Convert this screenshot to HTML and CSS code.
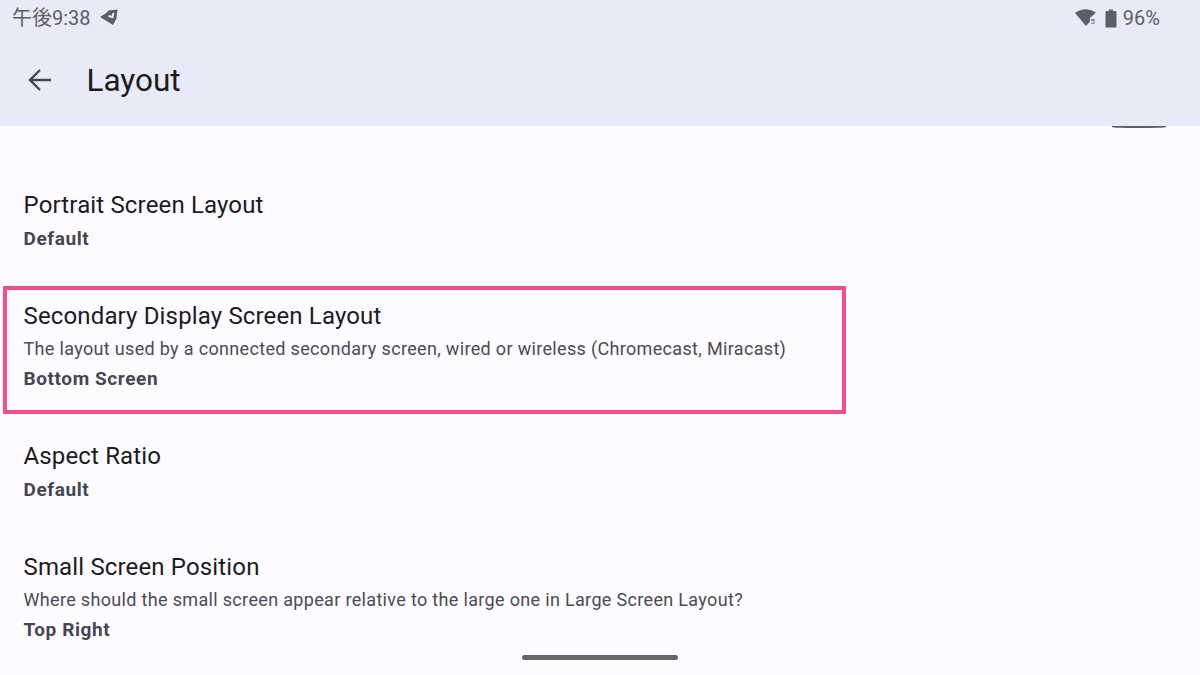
FILE: index.html
```html
<!DOCTYPE html>
<html lang="en">
  <head>
    <meta charset="UTF-8" />
    <meta name="viewport" content="width=device-width, initial-scale=1.0" />
    <title>Layout</title>
    <link rel="stylesheet" href="styles.css">
  </head>

  <body>
    <header class="top">
      <div class="status">
        <div class="status-side">
          <span>午後9:38</span>
          <svg class="notif-icon" width="20" height="18" viewBox="0 0 20 18">
            <path d="M1 8 L8 3.5 L9.5 1.5 L18.5 0.5 L17.5 9.5 L14 16 Z" fill="#5d5e66" />
            <path d="M9.5 7 L13.5 8 L14.5 4" fill="none" stroke="#e8eaf8" stroke-width="2" />
          </svg>
        </div>
        <div class="status-side">
          <svg class="wifi-icon" width="22" height="18" viewBox="0 0 22 18">
            <path d="M0 4 Q10 -3 21 3.5 L15 9 L15 12.5 L11 17 Z" fill="#5d5e66" />
            <text x="15.5" y="15" class="wifi-num">5</text>
          </svg>
          <svg class="battery-icon" width="12" height="19" viewBox="0 0 12 19">
            <path d="M4 0.5 H8 V2 H10.5 Q11.5 2 11.5 3 V17.5 Q11.5 18.5 10.5 18.5 H1.5 Q0.5 18.5 0.5 17.5 V3 Q0.5 2 1.5 2 H4 Z" fill="#5d5e66" />
          </svg>
          <span>96%</span>
        </div>
      </div>
      <div class="appbar">
        <svg class="back" width="24" height="24" viewBox="0 0 24 24">
          <path d="M23 12 H2 M12 2 L2 12 L12 22" fill="none" stroke="#45464f" stroke-width="2.4" />
        </svg>
        <h1>Layout</h1>
      </div>
    </header>

    <main class="list">
      <div class="peek"></div>

      <div class="row">
        <p class="name">Portrait Screen Layout</p>
        <p class="value">Default</p>
      </div>

      <div class="row">
        <p class="name">Secondary Display Screen Layout</p>
        <p class="desc">The layout used by a connected secondary screen, wired or wireless (Chromecast, Miracast)</p>
        <p class="value">Bottom Screen</p>
        <div class="highlight"></div>
      </div>

      <div class="row">
        <p class="name">Aspect Ratio</p>
        <p class="value">Default</p>
      </div>

      <div class="row">
        <p class="name">Small Screen Position</p>
        <p class="desc">Where should the small screen appear relative to the large one in Large Screen Layout?</p>
        <p class="value">Top Right</p>
      </div>
    </main>

    <div class="home-pill"></div>
  </body>
</html>
```

FILE: styles.css
```css
* {
  box-sizing: border-box;
  font-family: Roboto, "Noto Sans CJK JP", sans-serif;
}

html,
body {
  margin: 0;
  height: 675px;
  overflow: hidden;
  background-color: #fdfbff;
}

p {
  margin: 0;
}

.top {
  height: 126px;
  background-color: #e8eaf8;
}

.status {
  display: flex;
  justify-content: space-between;
  height: 36px;
  padding: 0 40px 0 12px;
  color: #5d5e66;
  font-size: 20px;
  line-height: 36px;
}

.status-side {
  display: flex;
  align-items: center;
}

.notif-icon {
  margin-left: 8px;
}

.wifi-icon {
  margin-right: 8px;
}

.wifi-num {
  font-size: 8px;
  fill: #5d5e66;
}

.battery-icon {
  margin-right: 6px;
}

.appbar {
  display: flex;
  align-items: center;
  height: 88px;
  padding: 0 0 0 28px;
}

.back {
  margin-right: 34.5px;
}

h1 {
  margin: 0;
  color: #1b1b1f;
  font-size: 31.5px;
  font-weight: 400;
}

.list {
  position: relative;
  padding-top: 52px;
}

.peek {
  position: absolute;
  top: 0;
  right: 34px;
  width: 54px;
  height: 2px;
  border-radius: 0 0 50% 50%;
  background-color: #5d5e66;
}

.row {
  position: relative;
  width: 850px;
  padding: 13px 23.5px 36px;
}

.name {
  color: #1b1b1f;
  font-size: 24px;
  line-height: 28px;
  letter-spacing: 0.15px;
}

.desc {
  margin-top: 5px;
  color: #4a4b54;
  font-size: 18px;
  line-height: 28px;
  letter-spacing: 0.33px;
}

.value {
  margin-top: 6px;
  color: #45464f;
  font-size: 19px;
  font-weight: 700;
  line-height: 28px;
  letter-spacing: 0.6px;
}

.desc + .value {
  margin-top: 2px;
}

.highlight {
  position: absolute;
  top: -3.5px;
  left: 2.5px;
  width: 843.5px;
  height: 128.5px;
  border: 4.5px solid #f44e8a;
}

.home-pill {
  position: absolute;
  left: 522px;
  top: 655px;
  width: 156px;
  height: 5px;
  border-radius: 3px;
  background-color: #666666;
}
```
